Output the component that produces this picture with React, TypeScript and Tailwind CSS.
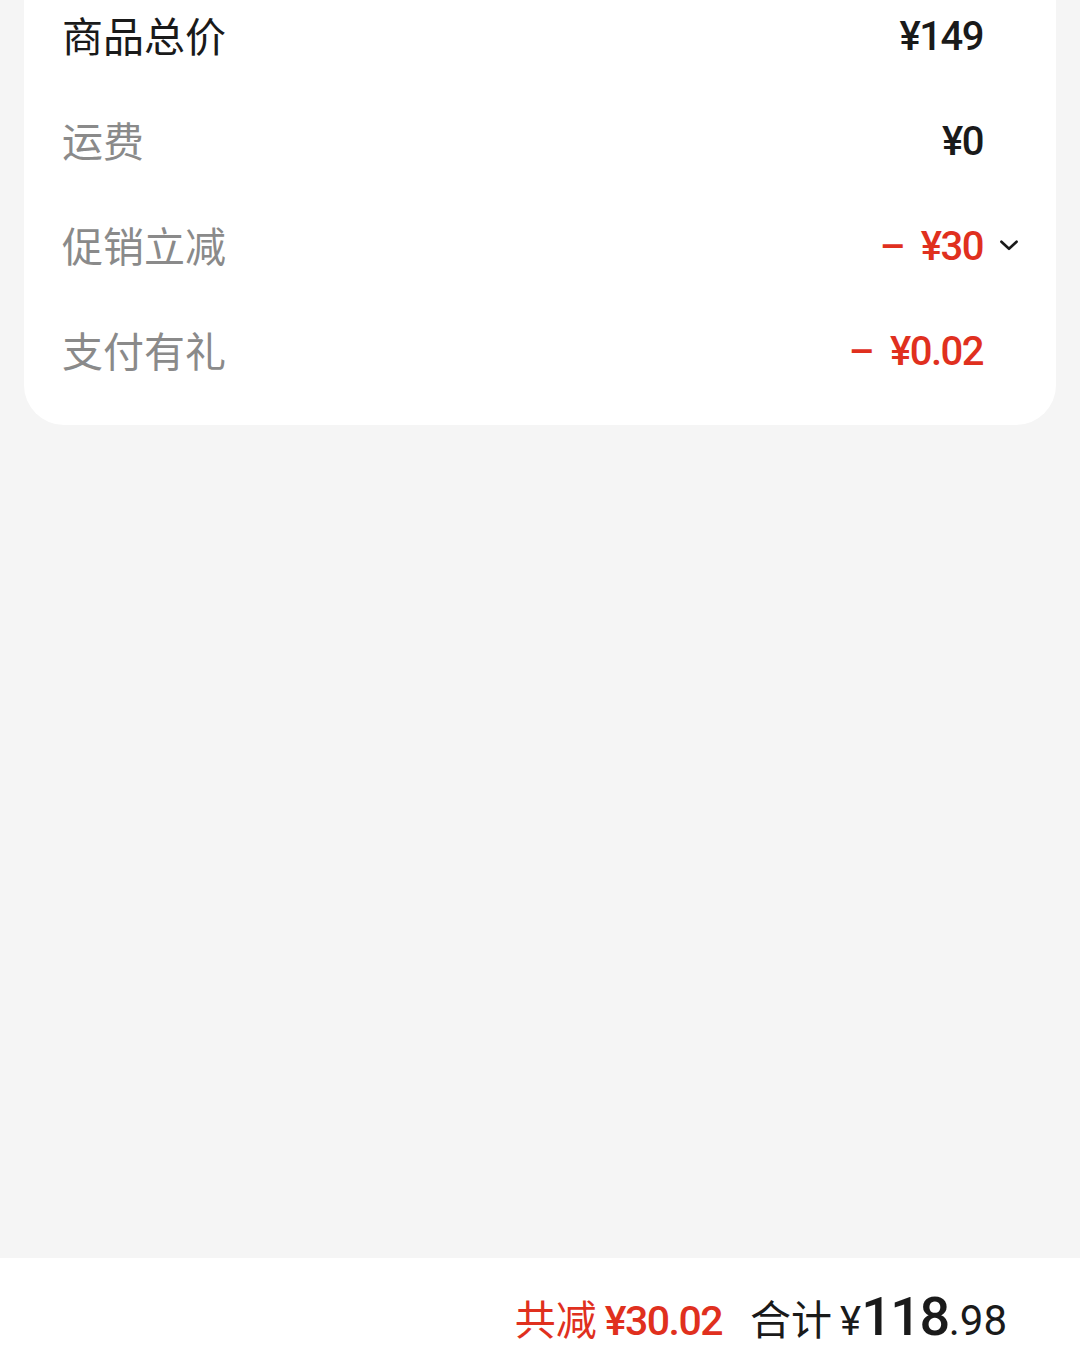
import React from "react";

function Row({ label, value, dark, red, chevron }: { label: string; value: string; dark?: boolean; red?: boolean; chevron?: boolean }) {
  return (
    <div className="h-[105px] flex items-center justify-between pl-[38px] pr-[73px] relative">
      <span
        className={`inline-block font-['Noto_Sans_CJK_SC',sans-serif] text-[41px] leading-none -mt-[4px] ${dark ? "text-[#1a1a1a]" : "text-[#8a8a8a]"}`}
      >
        {label}
      </span>
      <span
        className={`inline-block font-['Roboto',sans-serif] text-[40px] leading-none font-medium tracking-[-1.5px] whitespace-pre ${red ? "text-[#e0301e]" : "text-[#1a1a1a]"}`}
      >
        {value}
      </span>
      {chevron && (
        <svg
          className="absolute right-[34px] top-[38px]"
          width="26"
          height="26"
          viewBox="0 0 24 24"
          fill="none"
          stroke="#1a1a1a"
          strokeWidth="2.4"
          strokeLinecap="round"
          strokeLinejoin="round"
        >
          <path d="M5 9l7 6.5 7-6.5" />
        </svg>
      )}
    </div>
  );
}

export default function App() {
  return (
    <div className="w-[1080px] h-[1350px] bg-[#f5f5f5] flex flex-col overflow-hidden">
      <div className="flex-1">
        <div className="mx-[24px] -mt-[16px] bg-white rounded-b-[40px] pb-[21px]">
          <Row label="商品总价" value="¥149" dark />
          <Row label="运费" value="¥0" />
          <Row label="促销立减" value="–  ¥30" red chevron />
          <Row label="支付有礼" value="–  ¥0.02" red />
        </div>
      </div>
      <div className="h-[92px] bg-white flex items-end justify-end pr-[73px] pb-[6px]">
        <div className="flex items-baseline">
          <span className="inline-block font-['Noto_Sans_CJK_SC',sans-serif] text-[41px] leading-none text-[#e0301e]">共减</span>
          <span className="inline-block font-['Roboto',sans-serif] text-[41px] leading-none font-medium text-[#e0301e] ml-[8px] tracking-[-1.5px]">¥30.02</span>
          <span className="inline-block font-['Noto_Sans_CJK_SC',sans-serif] text-[41px] leading-none text-[#1a1a1a] ml-[28px]">合计</span>
          <span className="inline-block font-['Roboto',sans-serif] text-[40px] leading-none text-[#1a1a1a] ml-[8px]">¥</span>
          <span className="inline-block font-['Roboto',sans-serif] text-[54px] leading-none font-medium text-[#1a1a1a] tracking-[-1.5px]">118</span>
          <span className="inline-block font-['Roboto',sans-serif] text-[42px] leading-none text-[#1a1a1a]">.98</span>
        </div>
      </div>
    </div>
  );
}
